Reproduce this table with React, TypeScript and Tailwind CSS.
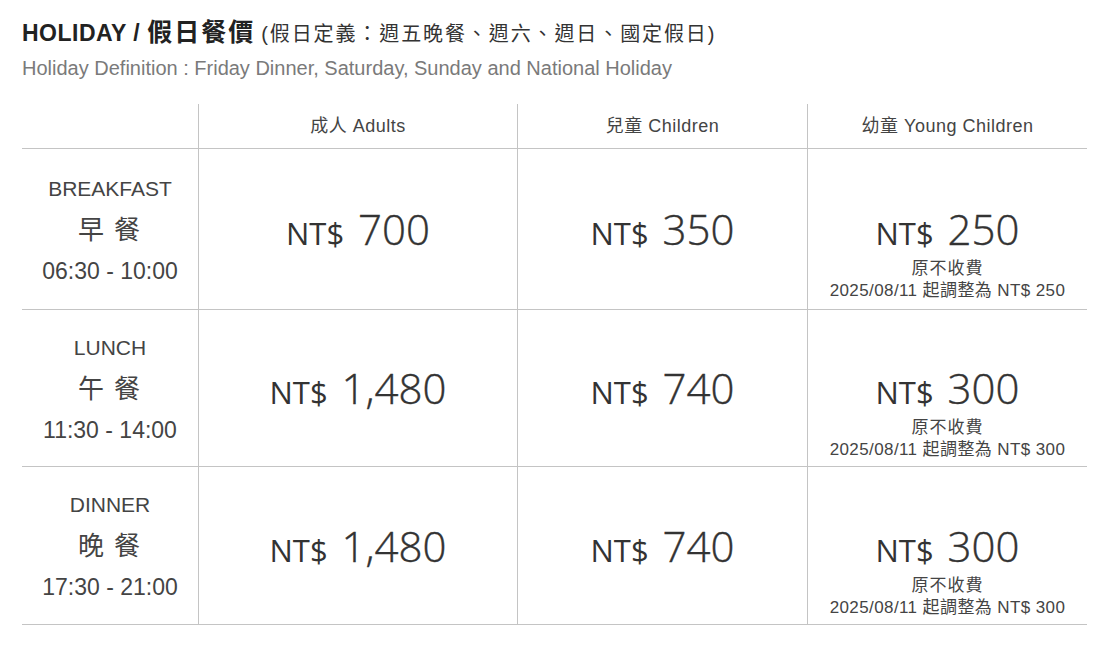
const narrow = "font-['Liberation_Sans','Noto_Sans_CJK_TC',sans-serif]";
const price = "font-['Open_Sans','Noto_Sans','Noto_Sans_CJK_TC',sans-serif]";

type Meal = {
  en: string;
  zh: string;
  time: string;
  adult: string;
  child: string;
  young: string;
};

const meals: Meal[] = [
  { en: "BREAKFAST", zh: "早 餐", time: "06:30 - 10:00", adult: "700", child: "350", young: "250" },
  { en: "LUNCH", zh: "午 餐", time: "11:30 - 14:00", adult: "1,480", child: "740", young: "300" },
  { en: "DINNER", zh: "晚 餐", time: "17:30 - 21:00", adult: "1,480", child: "740", young: "300" },
];

function Price({ value }: { value: string }) {
  return (
    <div className={`${price} flex items-baseline gap-[14px] text-[#333] leading-none`}>
      <span className="text-[31px]">NT$</span>
      <span className="text-[42px] font-light [-webkit-text-stroke:0.4px_#333]">{value}</span>
    </div>
  );
}

function Cell({ children, last }: { children: React.ReactNode; last?: boolean }) {
  return (
    <div className={`border-b border-[#c4c4c4] ${last ? "" : "border-r"} flex items-center justify-center`}>
      {children}
    </div>
  );
}

export default function App() {
  return (
    <div className="w-[1112px] h-[650px] bg-white px-[22px] pt-[20px] text-[#333]">
      <div className="flex items-baseline gap-[6px] leading-none">
        <span className="font-['Liberation_Sans','Noto_Sans_CJK_TC',sans-serif] font-bold text-[23px] text-[#222] tracking-[0.5px]">
          HOLIDAY / <span className="text-[25px] tracking-[2px]">假日餐價</span>
        </span>
        <span className={`${narrow} text-[20px] text-[#333] tracking-[1.9px]`}>(假日定義：週五晚餐、週六、週日、國定假日)</span>
      </div>
      <div className={`${narrow} mt-[13px] text-[20px] text-[#7a7a7a] leading-none`}>
        Holiday Definition : Friday Dinner, Saturday, Sunday and National Holiday
      </div>

      <div className="mt-[26px] w-[1065px] grid grid-cols-[177px_319px_290px_279px] grid-rows-[45px_161px_157px_158px]">
        <div className="border-b border-r border-[#c4c4c4]" />
        <Cell>
          <span className={`${narrow} text-[18px] text-[#444] tracking-[0.5px]`}>成人 Adults</span>
        </Cell>
        <Cell>
          <span className={`${narrow} text-[18px] text-[#444] tracking-[0.5px]`}>兒童 Children</span>
        </Cell>
        <Cell last>
          <span className={`${narrow} text-[18px] text-[#444] tracking-[0.5px]`}>幼童 Young Children</span>
        </Cell>

        {meals.map((m) => (
          <Row key={m.en} meal={m} />
        ))}
      </div>
    </div>
  );
}

function Row({ meal }: { meal: Meal }) {
  return (
    <>
      <Cell>
        <div className="flex flex-col items-center text-[#444] pt-[2px]">
          <span className={`${narrow} text-[21px] leading-none`}>{meal.en}</span>
          <span className="font-['Noto_Sans_CJK_TC',sans-serif] text-[26px] leading-none mt-[16px] tracking-[2px]">
            {meal.zh}
          </span>
          <span className={`${narrow} text-[23px] leading-none mt-[19px]`}>{meal.time}</span>
        </div>
      </Cell>
      <Cell>
        <Price value={meal.adult} />
      </Cell>
      <Cell>
        <Price value={meal.child} />
      </Cell>
      <div className="border-b border-[#c4c4c4] grid grid-rows-[1fr_auto_1fr] justify-items-center">
        <div />
        <Price value={meal.young} />
        <div className={`${narrow} flex flex-col items-center text-[17px] leading-[22px] text-[#444] pt-[8px]`}>
          <span className="tracking-[1px]">原不收費</span>
          <span className="tracking-[0.4px]">2025/08/11 起調整為 NT$ {meal.young}</span>
        </div>
      </div>
    </>
  );
}
